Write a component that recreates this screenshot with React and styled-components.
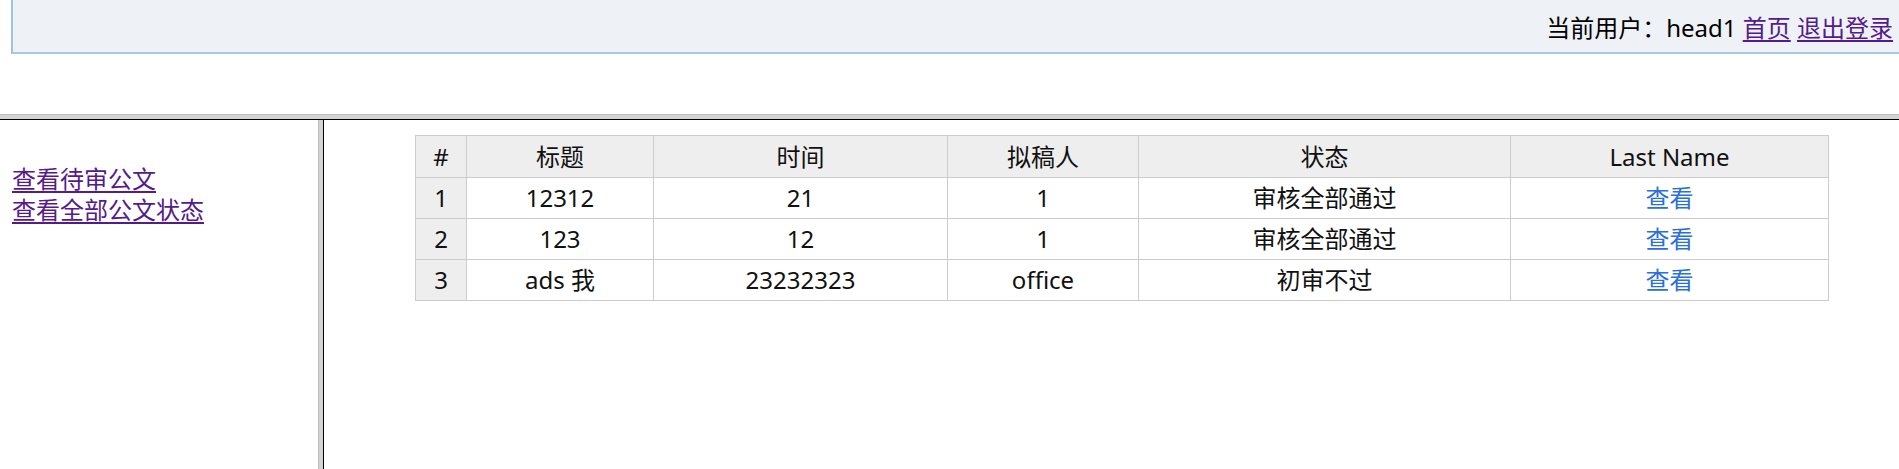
import React from "react";
import styled, { createGlobalStyle } from "styled-components";

const Global = createGlobalStyle`
  html, body { margin: 0; padding: 0; background: #fff; overflow: hidden; }
  body { font-family: "Noto Sans", "Noto Sans CJK SC", sans-serif; color: #000; }
`;

const Page = styled.div`
  display: grid;
  grid-template-rows: 114px 6px 349px;
  width: 1899px;
  height: 469px;
`;

const TopFrame = styled.div`
  overflow: hidden;
`;

const HeaderBox = styled.div`
  margin-left: 11px;
  height: 40px;
  padding: 12px 6px 0 0;
  background: #eef2f6;
  border-left: 2px solid #a3c2dc;
  border-bottom: 2px solid #a9c9e2;
  font-size: 24px;
  line-height: 32px;
  text-align: right;
  white-space: nowrap;
`;

const Link = styled.a`
  color: #551a8b;
  text-decoration: underline;
  text-underline-offset: 3px;
`;

const HSep = styled.div`
  background: #d3d3d3;
  border-top: 1px solid #bdbdbd;
  border-bottom: 1px solid #000;
`;

const Body = styled.div`
  display: grid;
  grid-template-columns: 318px 6px 1fr;
  overflow: hidden;
`;

const LeftFrame = styled.nav`
  display: flex;
  flex-direction: column;
  align-items: flex-start;
  padding: 43px 0 0 12px;
  font-size: 24px;
  line-height: 31px;
`;

const VSep = styled.div`
  background: #d3d3d3;
  border-left: 1px solid #bdbdbd;
  border-right: 1px solid #000;
`;

const RightFrame = styled.main`
  padding: 15px 0 0 91px;
`;

const Table = styled.table`
  border-collapse: collapse;
  table-layout: fixed;
  width: 1413px;
  font-size: 24px;
  line-height: 32px;
  color: #111;
`;

const Th = styled.th`
  font-weight: normal;
  background: #eeeeee;
  border: 1px solid #cccccc;
  padding: 5px 0 4px;
  text-align: center;
`;

const Td = styled.td`
  background: ${(p) => (p.$index ? "#eeeeee" : "#fff")};
  border: 1px solid #cccccc;
  padding: 4px 0 4px;
  text-align: center;
`;

const ViewLink = styled.a`
  color: #2a6fdc;
  text-decoration: none;
`;

const cols = [51, 187, 294, 191, 372, 318];
const headers = ["#", "标题", "时间", "拟稿人", "状态", "Last Name"];
const rows = [
  ["1", "12312", "21", "1", "审核全部通过"],
  ["2", "123", "12", "1", "审核全部通过"],
  ["3", "ads 我", "23232323", "office", "初审不过"],
];

export default function App() {
  return (
    <>
      <Global />
      <Page>
        <TopFrame>
          <HeaderBox>
            当前用户：head1 <Link href="#">首页</Link> <Link href="#">退出登录</Link>
          </HeaderBox>
        </TopFrame>
        <HSep />
        <Body>
          <LeftFrame>
            <Link href="#">查看待审公文</Link>
            <Link href="#">查看全部公文状态</Link>
          </LeftFrame>
          <VSep />
          <RightFrame>
            <Table>
              <colgroup>
                {cols.map((w, i) => (
                  <col key={i} style={{ width: w }} />
                ))}
              </colgroup>
              <thead>
                <tr>
                  {headers.map((h) => (
                    <Th key={h}>{h}</Th>
                  ))}
                </tr>
              </thead>
              <tbody>
                {rows.map((r) => (
                  <tr key={r[0]}>
                    {r.map((c, i) => (
                      <Td key={i} $index={i === 0}>
                        {c}
                      </Td>
                    ))}
                    <Td>
                      <ViewLink href="#">查看</ViewLink>
                    </Td>
                  </tr>
                ))}
              </tbody>
            </Table>
          </RightFrame>
        </Body>
      </Page>
    </>
  );
}
